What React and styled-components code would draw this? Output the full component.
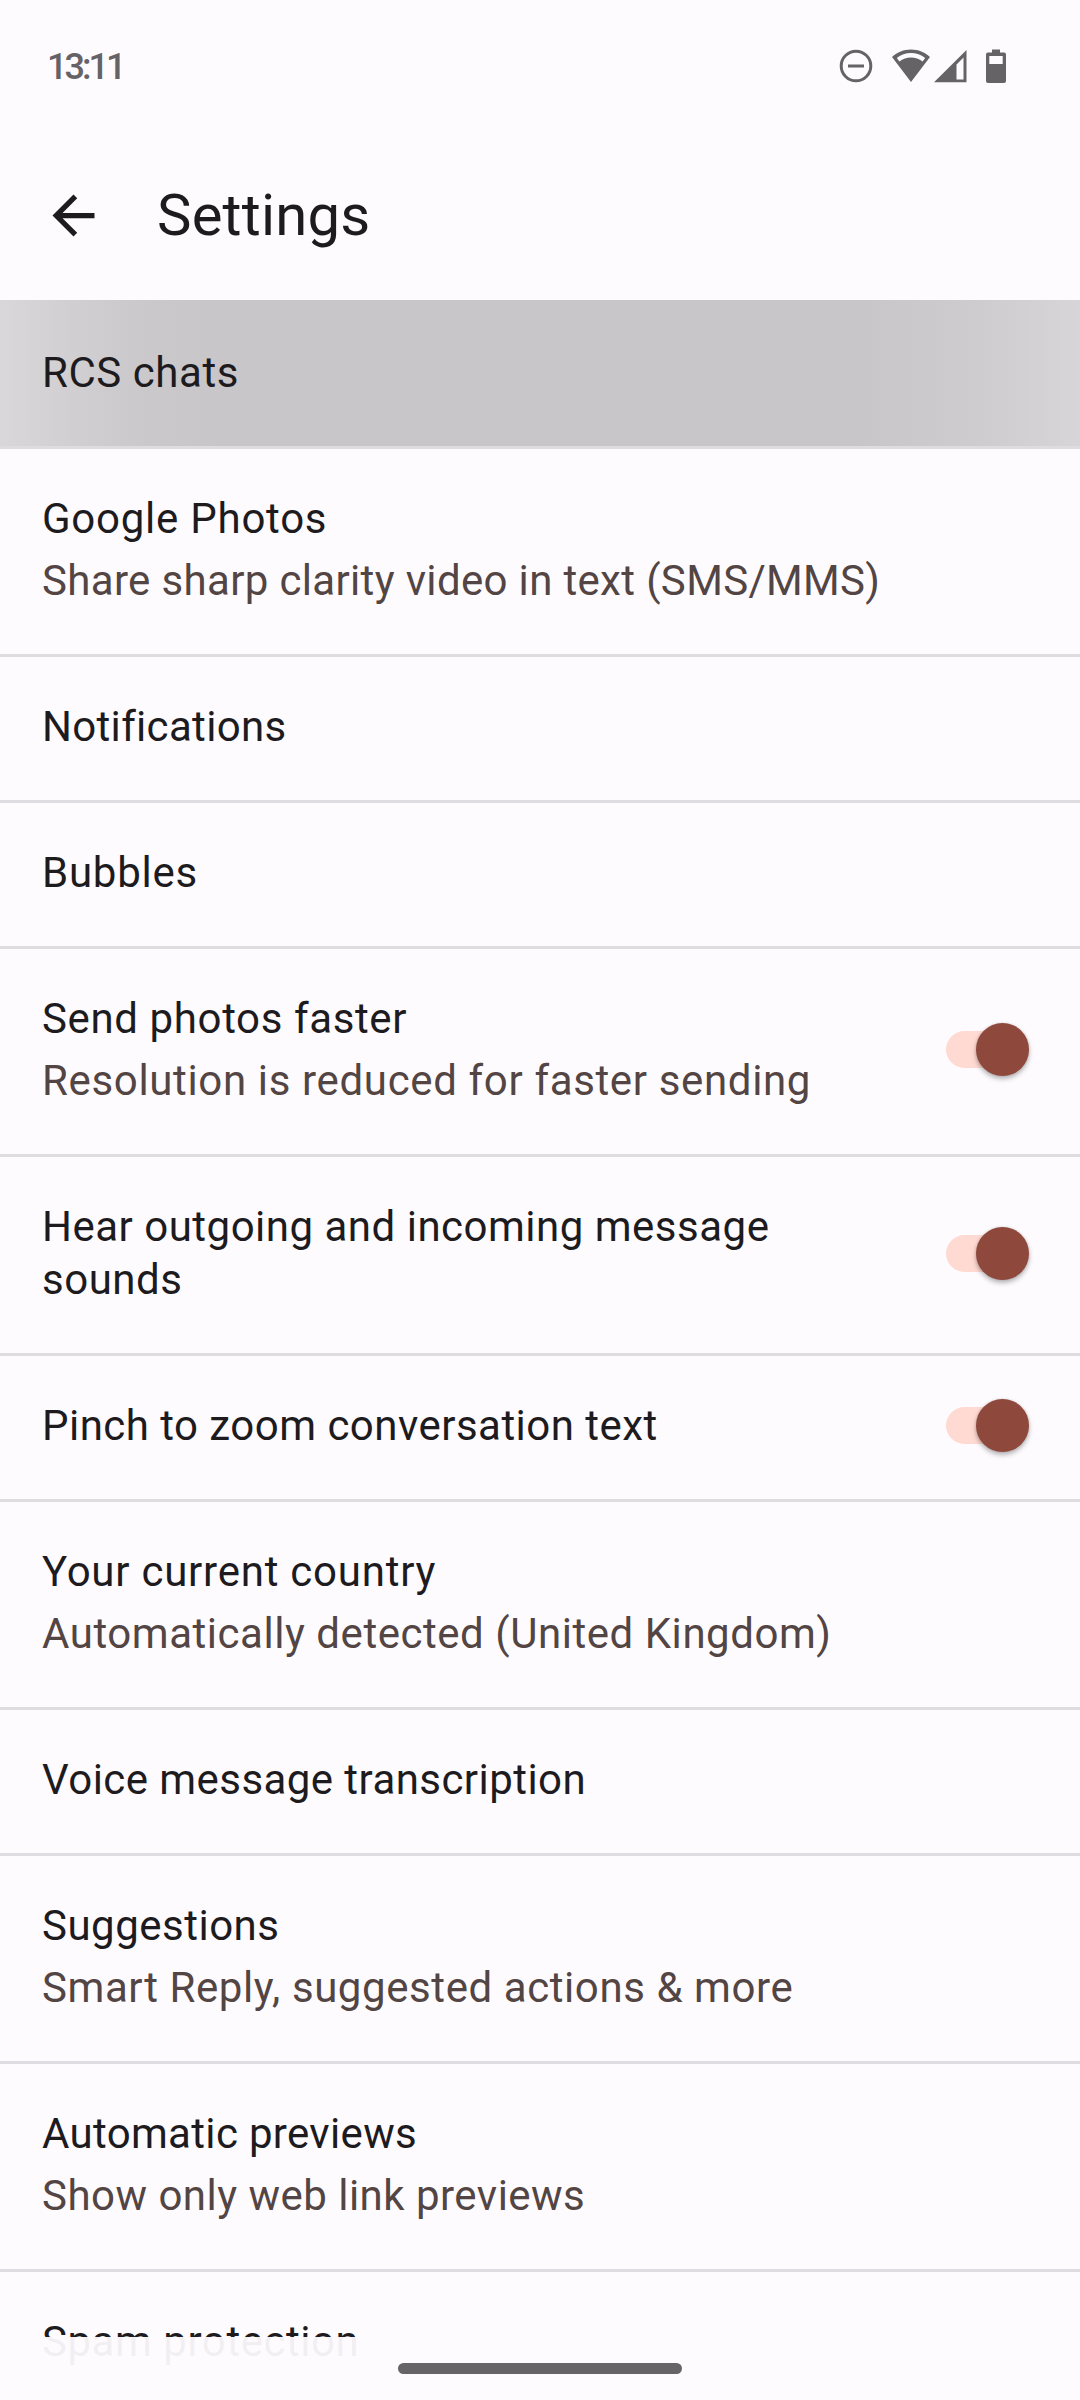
import React from 'react'
import styled, { createGlobalStyle } from 'styled-components'

const GlobalStyle = createGlobalStyle`
  body {
    margin: 0;
    background: #fefbff;
    font-family: Roboto, 'Noto Sans', sans-serif;
  }
`

const Screen = styled.div`
  position: relative;
  width: 1080px;
  height: 2400px;
  overflow: hidden;
  background: #fefbff;
  color: #1d1b1e;
`

const StatusBar = styled.div`
  height: 132px;
  box-sizing: border-box;
  padding: 0 74px 0 47px;
  display: flex;
  align-items: center;
  justify-content: space-between;
  color: #666367;
`

const Clock = styled.div`
  padding-top: 2px;
  font-size: 36px;
  font-weight: 500;
  line-height: 44px;
  letter-spacing: ${props => props.$tracking}px;
`

const StatusIcons = styled.div`
  display: flex;
  align-items: center;

  svg {
    display: block;
  }
`

const IconGap = styled.div`
  width: ${props => props.$size}px;
`

const AppBar = styled.div`
  height: 168px;
  box-sizing: border-box;
  padding: 0 42px 2px;
  display: flex;
  align-items: center;
`

const BackButton = styled.button`
  width: 63px;
  height: 63px;
  padding: 0;
  border: 0;
  background: none;
  color: #1d1b1e;
`

const PageTitle = styled.h1`
  margin: 0 0 0 52px;
  font-size: 58px;
  font-weight: 400;
  line-height: 72px;
  letter-spacing: ${props => props.$tracking}px;
`

const List = styled.div`
  display: flex;
  flex-direction: column;
`

const Row = styled.div`
  display: flex;
  align-items: center;
  justify-content: space-between;
  padding: ${props => (props.$pressed ? 46 : 43)}px 51px 47px 42px;
  border-bottom: 3px solid #dedce0;
  background: ${props =>
    props.$pressed
      ? 'linear-gradient(90deg, #d9d7da 0, #d0ced1 80px, #cac8cb 150px, #c8c6c9 220px, #c8c6c9 860px, #cecccf 980px, #d7d5d8 1080px) padding-box'
      : 'none'};
`

const RowText = styled.div`
  display: flex;
  flex-direction: column;
  gap: 9px;
`

const Title = styled.div`
  font-size: 42px;
  line-height: 53px;
  letter-spacing: ${props => props.$tracking}px;
  white-space: pre-line;
`

const Summary = styled(Title)`
  color: #534543;
`

const Track = styled.div`
  width: 83px;
  height: 37px;
  border-radius: 19px;
  background: #ffdad3;
  display: flex;
  align-items: center;
  justify-content: flex-end;
`

const Thumb = styled.div`
  flex: none;
  width: 53px;
  height: 53px;
  border-radius: 50%;
  background: #8f493c;
  box-shadow: 0 3px 5px rgba(0, 0, 0, 0.28), 0 0 3px rgba(0, 0, 0, 0.12);
`

const NavigationBar = styled.div`
  position: absolute;
  left: 0;
  right: 0;
  bottom: 0;
  height: 63px;
  display: flex;
  align-items: center;
  justify-content: center;
  background: rgba(254, 251, 255, 0.95);
`

const Handle = styled.div`
  width: 284px;
  height: 11px;
  border-radius: 6px;
  background: #676468;
`

const settings = [
  { title: 'RCS chats', tracking: 0.55, pressed: true },
  {
    title: 'Google Photos',
    tracking: 0.75,
    summary: 'Share sharp clarity video in text (SMS/MMS)',
    summaryTracking: 0.34
  },
  { title: 'Notifications', tracking: 0.32 },
  { title: 'Bubbles', tracking: 0.75 },
  {
    title: 'Send photos faster',
    tracking: 0.62,
    summary: 'Resolution is reduced for faster sending',
    summaryTracking: 0.65,
    checked: true
  },
  {
    title: 'Hear outgoing and incoming message\nsounds',
    tracking: 0.5,
    checked: true
  },
  { title: 'Pinch to zoom conversation text', tracking: 0.47, checked: true },
  {
    title: 'Your current country',
    tracking: 0.76,
    summary: 'Automatically detected (United Kingdom)',
    summaryTracking: 0.54
  },
  { title: 'Voice message transcription', tracking: 0.44 },
  {
    title: 'Suggestions',
    tracking: 0.5,
    summary: 'Smart Reply, suggested actions & more',
    summaryTracking: 0.58
  },
  {
    title: 'Automatic previews',
    tracking: 0.33,
    summary: 'Show only web link previews',
    summaryTracking: 0.48
  },
  { title: 'Spam protection', tracking: 0.55 }
]

const DoNotDisturbIcon = () => (
  <svg width="34" height="34" viewBox="0 0 34 34" fill="none" stroke="currentColor" strokeWidth="3">
    <circle cx="17" cy="17" r="14.8" />
    <path d="M9 17h16" />
  </svg>
)

const WifiIcon = () => (
  <svg width="38" height="34" viewBox="0 0 38 34" fill="currentColor">
    <path
      fillRule="evenodd"
      d="M19 0.5C11.8 0.5 5.2 3.2 0 8L19 33L38 8C32.8 3.2 26.2 0.5 19 0.5ZM4.8 8.9C9 5.7 13.8 4 19 4S29 5.7 33.2 8.9L30.6 12.4C27.2 10 23.3 8.6 19 8.6S10.8 10 7.4 12.4Z"
    />
  </svg>
)

const SignalIcon = () => (
  <svg width="33" height="34" viewBox="0 0 33 34" fill="currentColor">
    <path fillRule="evenodd" d="M32.5 1V33.2H0ZM29.5 8.5L22.5 15.5V30.4H29.5Z" />
  </svg>
)

const BatteryIcon = () => (
  <svg width="20" height="34" viewBox="0 0 20 34" fill="currentColor">
    <path
      fillRule="evenodd"
      d="M6 0.5H14V3.5H18Q20 3.5 20 5.5V32Q20 34 18 34H2Q0 34 0 32V5.5Q0 3.5 2 3.5H6ZM3.3 7V15H16.7V7Z"
    />
  </svg>
)

const ArrowBackIcon = () => (
  <svg width="63" height="63" viewBox="0 0 24 24" fill="currentColor">
    <path d="M20 11H7.83l5.59-5.59L12 4l-8 8 8 8 1.41-1.41L7.83 13H20v-2z" />
  </svg>
)

const SettingRow = ({ title, tracking, summary, summaryTracking, pressed, checked }) => (
  <Row $pressed={pressed}>
    <RowText>
      <Title $tracking={tracking}>{title}</Title>
      {summary && <Summary $tracking={summaryTracking}>{summary}</Summary>}
    </RowText>
    {checked && (
      <Track role="switch" aria-checked="true">
        <Thumb />
      </Track>
    )}
  </Row>
)

const App = () => (
  <Screen>
    <GlobalStyle />
    <StatusBar>
      <Clock $tracking={-3}>13:11</Clock>
      <StatusIcons>
        <DoNotDisturbIcon />
        <IconGap $size={19} />
        <WifiIcon />
        <IconGap $size={4} />
        <SignalIcon />
        <IconGap $size={19} />
        <BatteryIcon />
      </StatusIcons>
    </StatusBar>
    <AppBar>
      <BackButton aria-label="Back">
        <ArrowBackIcon />
      </BackButton>
      <PageTitle $tracking={0.2}>Settings</PageTitle>
    </AppBar>
    <List>
      {settings.map(setting => (
        <SettingRow key={setting.title} {...setting} />
      ))}
    </List>
    <NavigationBar>
      <Handle />
    </NavigationBar>
  </Screen>
)

export default App
